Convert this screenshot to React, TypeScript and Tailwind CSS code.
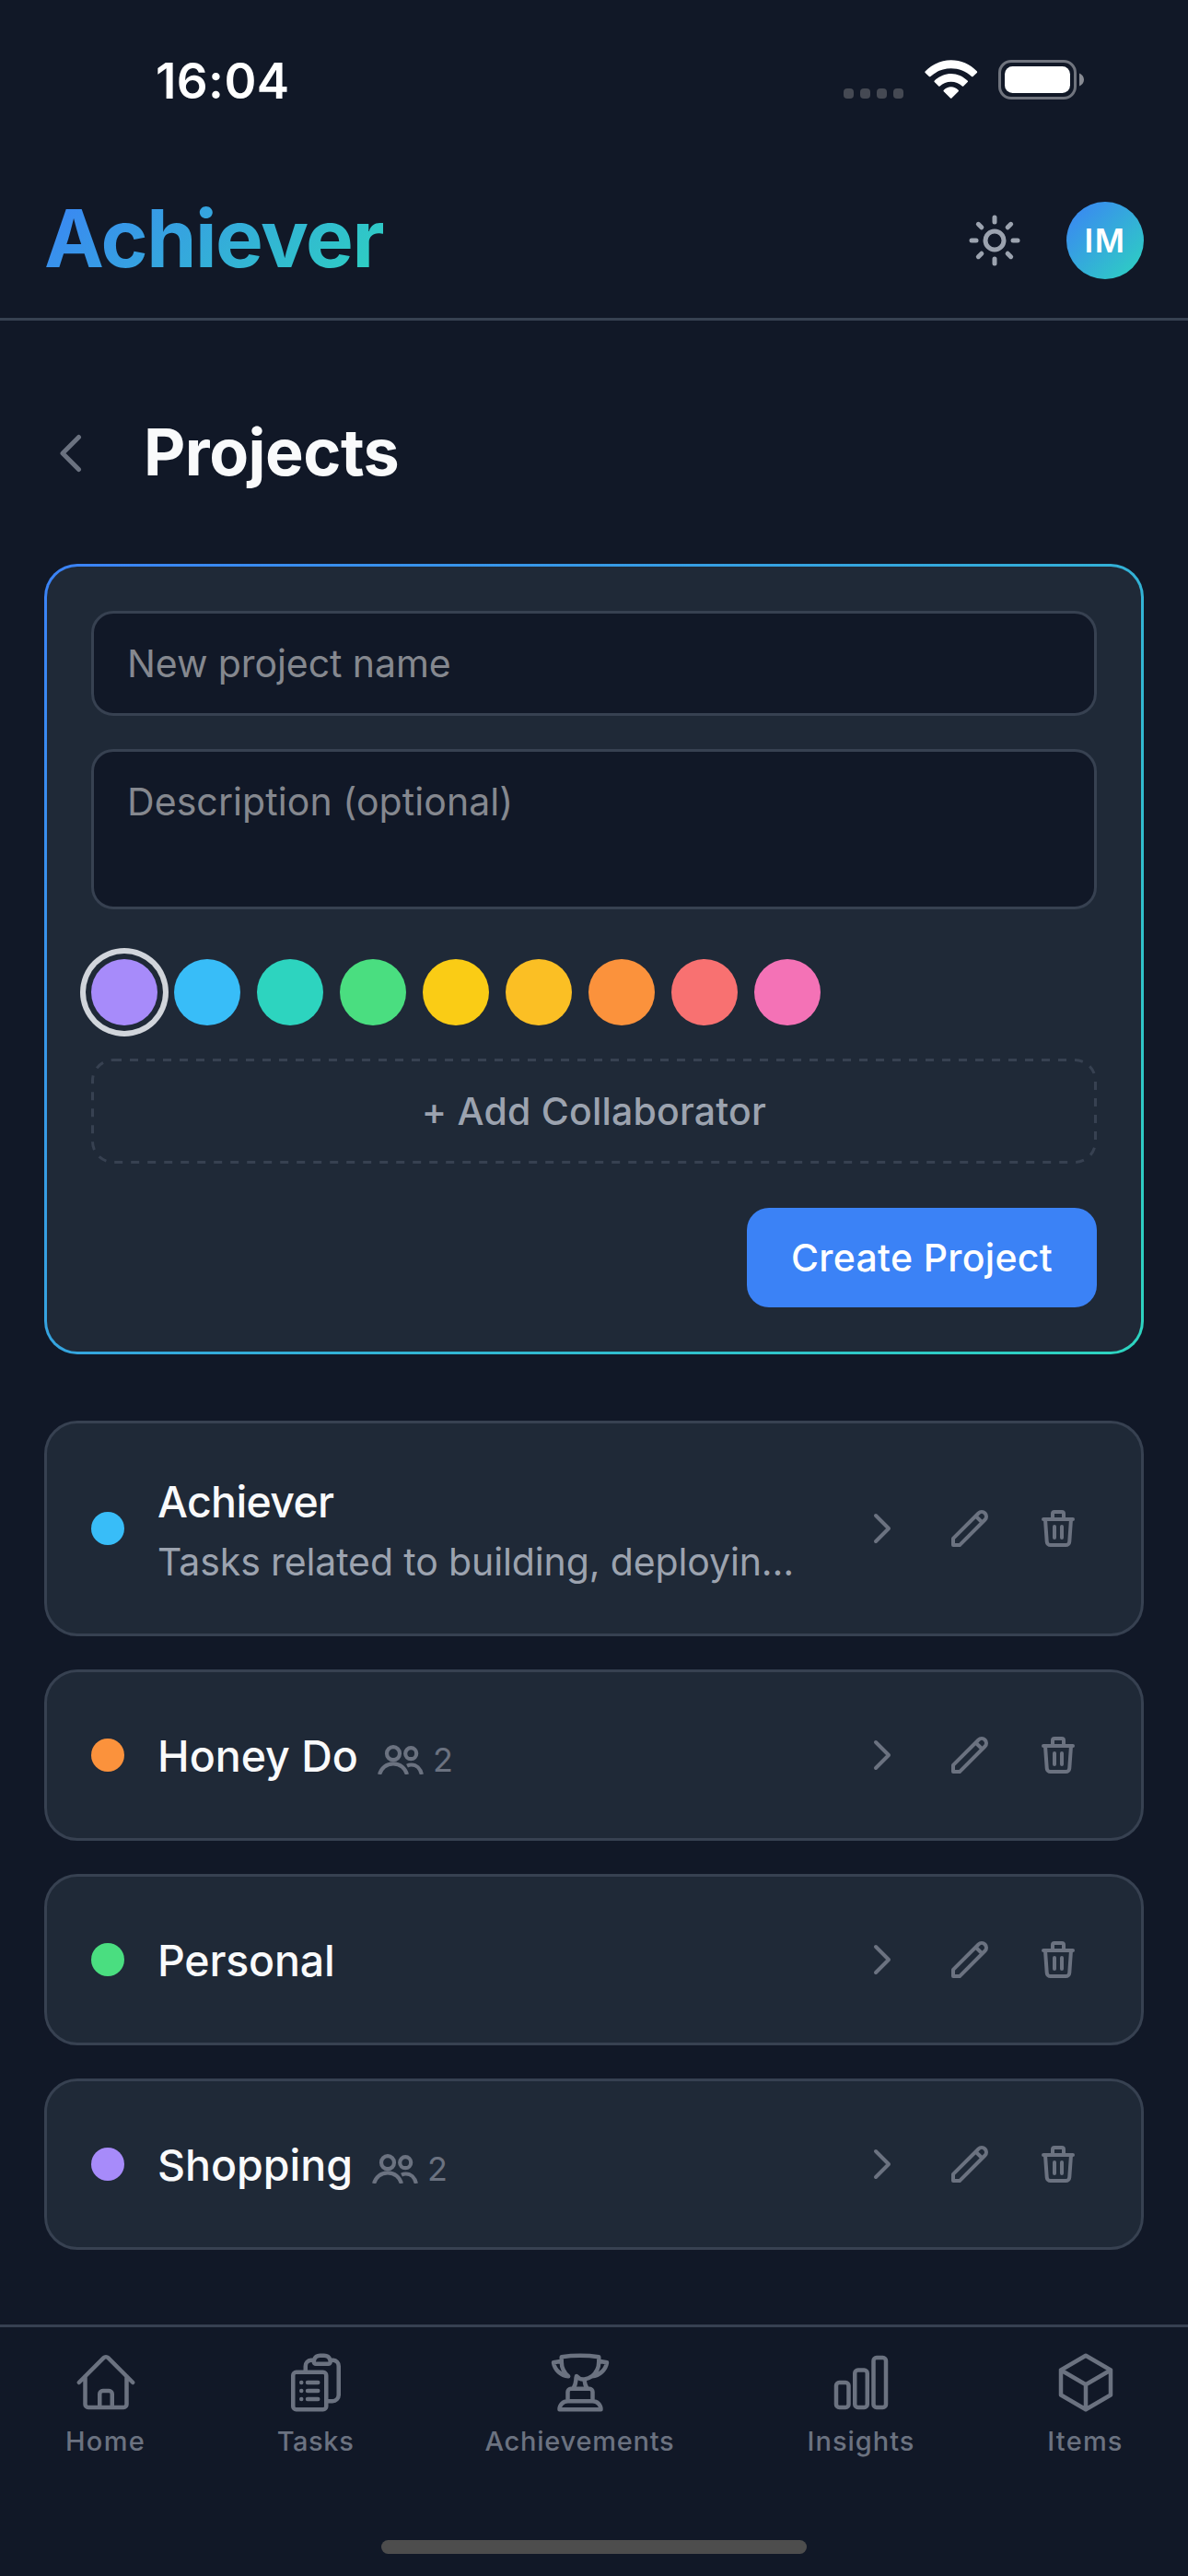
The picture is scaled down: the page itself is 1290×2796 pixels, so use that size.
import React from 'react';
import { Sun } from 'lucide-react';
import { HiOutlineChevronLeft, HiOutlineChevronRight, HiOutlinePencil, HiOutlineTrash } from 'react-icons/hi';
import { HiOutlineChartBar, HiOutlineClipboardDocumentList, HiOutlineCube, HiOutlineHome } from 'react-icons/hi2';

const TrophyIcon = ({ size }: { size: number }) => (
  <svg
    width={size}
    height={size}
    viewBox="0 0 24 24"
    fill="none"
    stroke="currentColor"
    strokeWidth="1.5"
    strokeLinecap="round"
    strokeLinejoin="round"
  >
    <path d="M16.5 18.75h-9m9 0a3 3 0 0 1 3 3h-15a3 3 0 0 1 3-3m9 0v-3.375c0-.621-.503-1.125-1.125-1.125h-.871M7.5 18.75v-3.375c0-.621.504-1.125 1.125-1.125h.872m5.007 0H9.497m5.007 0a7.454 7.454 0 0 1-.982-3.172M9.497 14.25a7.454 7.454 0 0 0 .981-3.172" />
    <path d="M5.25 4.236c-.982.143-1.954.317-2.916.52A6.003 6.003 0 0 0 7.73 9.728M5.25 4.236V4.5c0 2.108.966 3.99 2.48 5.228M5.25 4.236V2.721C7.456 2.41 9.71 2.25 12 2.25c2.291 0 4.545.16 6.75.47v1.516" />
    <path d="M18.75 4.236V4.5c0 2.108-.966 3.99-2.48 5.228m2.48-5.492a46.32 46.32 0 0 1 2.916.52 6.003 6.003 0 0 1-5.395 4.972m0 0a6.726 6.726 0 0 1-2.749 1.1c-1.1.15-2.1-.25-2.85-1.15l-.19.8" />
  </svg>
);

const swatches = [
  'bg-[#a78bfa] ring-6 ring-[#d1d5db] ring-offset-6 ring-offset-[#1f2937]',
  'bg-[#38bdf8]',
  'bg-[#2dd4bf]',
  'bg-[#4ade80]',
  'bg-[#facc15]',
  'bg-[#fbbf24]',
  'bg-[#fb923c]',
  'bg-[#f87171]',
  'bg-[#f472b6]',
];

const projects = [
  {
    name: 'Achiever',
    dot: 'bg-[#38bdf8]',
    tracking: 'tracking-[-0.67px]',
    description: 'Tasks related to building, deployin…',
  },
  { name: 'Honey Do', dot: 'bg-[#fb923c]', tracking: '', members: 2 },
  { name: 'Personal', dot: 'bg-[#4ade80]', tracking: 'tracking-[-0.2px]' },
  { name: 'Shopping', dot: 'bg-[#a78bfa]', tracking: '', members: 2 },
];

const tabs = [
  { label: 'Home', icon: HiOutlineHome, cell: 'w-[228px] tracking-[1.3px]' },
  { label: 'Tasks', icon: HiOutlineClipboardDocumentList, cell: 'w-[228px] tracking-[0.6px]' },
  { label: 'Achievements', icon: TrophyIcon, cell: 'w-[346px] tracking-[0.75px]' },
  { label: 'Insights', icon: HiOutlineChartBar, cell: 'w-[265px] tracking-[1px]' },
  { label: 'Items', icon: HiOutlineCube, cell: 'w-[222px] tracking-[1.2px]' },
];

const UsersIcon = () => (
  <svg width="50" height="32" viewBox="0 0 50 32" fill="none" stroke="currentColor" strokeWidth="4.2">
    <circle cx="17" cy="9.2" r="7" />
    <circle cx="36.2" cy="9.2" r="6" />
    <path d="M2.1 32C3.8 25 9.6 20.3 17 20.3S30.2 25 31.9 32" />
    <path d="M32 22.6c1.4-.7 3-1.1 4.7-1.1 5.4 0 9.7 4 11.2 10.5" />
  </svg>
);

const StatusBar = () => (
  <div className="h-[177px] pl-[169px] pr-[112px] flex justify-between">
    <div className="h-[177px] leading-[177px] text-white text-[53px] font-semibold tracking-[0.4px]">16:04</div>
    <div className="flex items-start pt-[65px]">
      <div className="flex gap-[7px] mt-[31px]">
        {[0, 1, 2, 3].map((i) => (
          <div key={i} className="size-[11px] rounded-[4px] bg-[#454953]"></div>
        ))}
      </div>
      <svg className="ml-[23px]" width="58" height="43" viewBox="0 0 58 43" fill="#fff">
        <path d="M.6 14Q0 13 .8 12.3C8.5 4.5 18 .3 28.7.3S49 4.5 56.7 12.3Q57.5 13 56.8 14L52.3 18.2Q51.7 18.6 51 18C45 12.3 37.2 9.2 28.7 9.2S12.4 12.3 6.4 18Q5.7 18.6 5.1 18.2Z" />
        <path d="M10.7 24.1Q10 23.3 10.8 22.6C15.7 17.7 22 14.9 28.7 14.9S41.7 17.7 46.6 22.6Q47.4 23.3 46.7 24.1L42.2 28.5Q41.5 29.1 40.8 28.5C37.6 25.4 33.3 23.7 28.7 23.7S19.8 25.4 16.6 28.5Q15.9 29.1 15.2 28.5Z" />
        <path d="M20.7 34.2Q20 33.4 20.8 32.7C23 30.5 25.7 29.3 28.7 29.3S34.4 30.5 36.6 32.7Q37.4 33.4 36.7 34.2L29.4 41.5Q28.7 42.1 28 41.5Z" />
      </svg>
      <svg className="ml-[22px]" width="94" height="43" viewBox="0 0 94 43">
        <rect x="1.5" y="1.5" width="82" height="40" rx="12.5" fill="none" stroke="#70747e" strokeWidth="3" />
        <rect x="7" y="7" width="71" height="29" rx="8.5" fill="#fff" />
        <path d="M88 14.5c3 1.2 5 3.9 5 7s-2 5.8-5 7z" fill="#888b93" />
      </svg>
    </div>
  </div>
);

const Header = () => (
  <header className="h-[171px] px-12 flex items-center justify-between border-b-3 border-[#374151]">
    <div className="-mt-1 leading-[110px] text-[87px] font-bold tracking-[-1.44px] text-transparent bg-clip-text bg-[linear-gradient(135deg,#3b82f6,#2dd4bf)]">
      Achiever
    </div>
    <div className="flex items-center gap-12">
      <Sun className="text-[#9ca3af]" size={60} strokeWidth={2} />
      <div className="size-[84px] rounded-full flex items-center justify-center text-white text-[35px] font-semibold tracking-[1.5px] bg-[linear-gradient(135deg,#3b82f6,#2dd4bf)]">
        IM
      </div>
    </div>
  </header>
);

const NewProjectForm = () => (
  <div className="mt-[90px] p-[3px] rounded-[36px] bg-[linear-gradient(135deg,#3b82f6,#2dd4bf)]">
    <div className="p-12 rounded-[33px] bg-[#1f2937] flex flex-col">
      <div className="h-[114px] px-9 pt-[2px] flex items-center rounded-3xl border-3 border-[#374151] bg-[#111827] text-[#85888f] text-[41px] tracking-[-0.08px]">
        New project name
      </div>
      <div className="mt-9 h-[174px] px-9 pt-6 rounded-3xl border-3 border-[#374151] bg-[#111827] text-[#85888f] text-[41px] leading-[60px] tracking-[0.08px]">
        Description (optional)
      </div>
      <div className="mt-[54px] flex gap-[18px]">
        {swatches.map((color) => (
          <div key={color} className={`size-[72px] rounded-full ${color}`}></div>
        ))}
      </div>
      <div className="relative mt-9 h-[114px] pt-[2px] flex items-center justify-center text-[#9ca3af] text-[41px] font-medium tracking-[0.2px]">
        <svg className="absolute inset-0" width="1092" height="114" fill="none" stroke="#374151" strokeWidth="3">
          <rect x="1.5" y="1.5" width="1089" height="111" rx="22.5" strokeDasharray="9 9" />
        </svg>
        + Add Collaborator
      </div>
      <button className="mt-12 self-end w-[380px] h-[108px] pt-[2px] rounded-3xl bg-[#3b82f6] text-white text-[41px] font-medium tracking-[0.32px]">
        Create Project
      </button>
    </div>
  </div>
);

const ProjectCard = ({ project }: { project: (typeof projects)[number] }) => (
  <div className="px-12 min-h-[186px] flex items-center rounded-[36px] border-3 border-[#374151] bg-[#1f2937]">
    <div className={`size-9 rounded-full ${project.dot}`}></div>
    <div className="ml-9 pt-[49px] pb-[47px] flex-1 whitespace-nowrap">
      <div className="flex items-center">
        <div className={`leading-[72px] text-[#f9fafb] text-[46.5px] font-medium ${project.tracking}`}>
          {project.name}
        </div>
        {project.members && (
          <div className="ml-[21px] mt-[7px] flex items-center gap-[10px] text-[#6b7280] text-[36px]">
            <UsersIcon />
            {project.members}
          </div>
        )}
      </div>
      {project.description && (
        <div className="-mt-px h-[61px] leading-[60px] text-[#9ca3af] text-[41px] tracking-[-0.12px]">
          {project.description}
        </div>
      )}
    </div>
    <div className="mr-[18px] flex gap-12 text-[#6b7280]">
      <HiOutlineChevronRight size={48} />
      <HiOutlinePencil size={48} />
      <HiOutlineTrash size={48} />
    </div>
  </div>
);

const TabBar = () => (
  <nav className="h-[273px] border-t-3 border-[#374151] flex flex-col items-center justify-between">
    <div className="pt-6 flex text-[#6b7280]">
      {tabs.map(({ label, icon: Icon, cell }) => (
        <div key={label} className={`flex flex-col items-center ${cell}`}>
          <Icon size={72} />
          <div className="mt-[7px] leading-[42px] text-[29px] font-medium">{label}</div>
        </div>
      ))}
    </div>
    <div className="mb-6 w-[462px] h-[15px] rounded-full bg-[#4d4d4d]"></div>
  </nav>
);

const App = () => {
  return (
    <div className="w-[1290px] h-[2796px] flex flex-col bg-[#111827] font-['Inter',sans-serif]">
      <StatusBar />
      <Header />
      <main className="flex-1 px-12 pt-[114px]">
        <div className="h-[60px] flex items-center gap-12">
          <HiOutlineChevronLeft className="text-[#6b7280]" size={60} />
          <h1 className="-mt-1 text-[#f9fafb] text-[70px] font-bold tracking-[-0.51px]">Projects</h1>
        </div>
        <NewProjectForm />
        <div className="mt-[72px] flex flex-col gap-9">
          {projects.map((project) => (
            <ProjectCard key={project.name} project={project} />
          ))}
        </div>
      </main>
      <TabBar />
    </div>
  );
};

export default App;
